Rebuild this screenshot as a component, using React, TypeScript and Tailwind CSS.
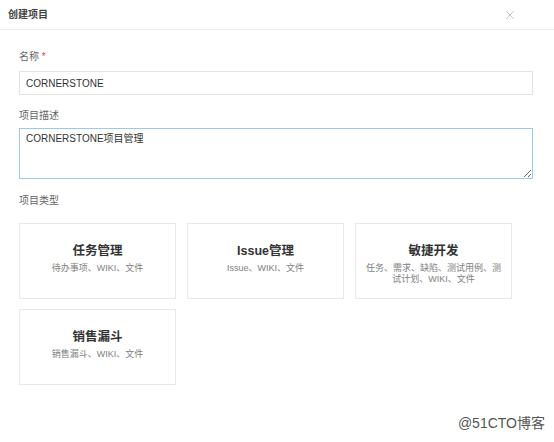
import { X } from "lucide-react";

const types = [
  { title: "任务管理", desc: "待办事项、WIKI、文件" },
  { title: "Issue管理", desc: "Issue、WIKI、文件" },
  { title: "敏捷开发", desc: "任务、需求、缺陷、测试用例、测试计划、WIKI、文件" },
  { title: "销售漏斗", desc: "销售漏斗、WIKI、文件" },
];

export default function App() {
  return (
    <div
      className="relative h-[442px] w-[554px] overflow-hidden bg-white text-[#333]"
      style={{ fontFamily: '"Liberation Sans", Arial, "Noto Sans CJK SC", sans-serif' }}
    >
      <div className="flex h-[30px] items-center justify-between border-b border-[#ebebeb] pl-[8px] pr-[37px]">
        <span className="text-[10px] font-bold text-[#444]">创建项目</span>
        <X className="h-[14px] w-[14px] text-[#aaa]" strokeWidth={1.2} />
      </div>

      <div className="px-[19px] pr-[21px] pt-[20px]">
        <div className="text-[10px] leading-[14px] text-[#666]">
          名称 <span className="text-[#e04e2c]">*</span>
        </div>
        <div className="mt-[7px] flex h-[24px] items-center border border-[#e3e3e3] px-[6px] text-[10px] text-[#333]">
          CORNERSTONE
        </div>

        <div className="mt-[14px] text-[10px] leading-[14px] text-[#666]">项目描述</div>
        <textarea
          readOnly
          defaultValue="CORNERSTONE项目管理"
          className="mt-[5px] block h-[51px] w-full border border-[#9cc7f1] px-[6px] py-[3px] text-[10px] leading-[14px] text-[#333] outline-none"
        />

        <div className="mt-[15px] text-[10px] leading-[14px] text-[#666]">项目类型</div>

        <div className="mt-[15px] grid w-[494px] grid-cols-[157px_157px_157px] gap-x-[11px] gap-y-[10px]">
          {types.map((t) => (
            <div
              key={t.title}
              className="flex h-[76px] flex-col items-center border border-[#e8e8e8] px-[9px] pt-[19px] text-center"
            >
              <div className="text-[12.5px] font-bold leading-[16px] text-[#333]">{t.title}</div>
              <div className="mt-[4px] break-all text-[9px] leading-[11px] text-[#808080]">{t.desc}</div>
            </div>
          ))}
        </div>
      </div>

      <div className="absolute bottom-[8px] right-[9px] text-[14px] text-[#555]">@51CTO博客</div>
    </div>
  );
}
